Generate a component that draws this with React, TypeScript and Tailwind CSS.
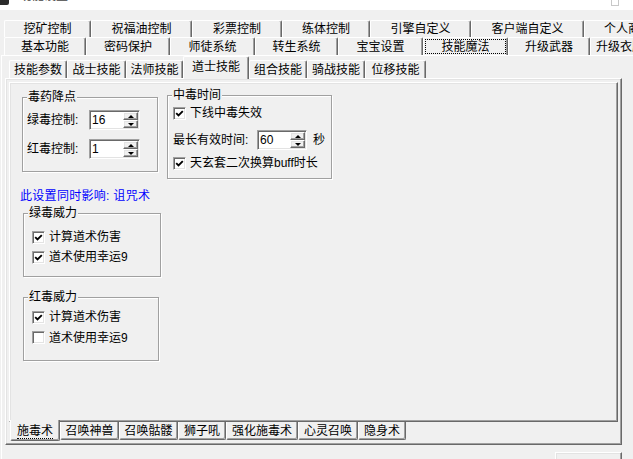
import React from "react";

// classic 3D edges
const raised =
  "border border-t-white border-l-white border-r-[#696969] border-b-[#696969] shadow-[inset_-1px_-1px_0_#a0a0a0,inset_1px_1px_0_#e3e3e3]";
const sunken =
  "border border-t-[#a0a0a0] border-l-[#a0a0a0] border-r-white border-b-white shadow-[inset_1px_1px_0_#696969,inset_-1px_-1px_0_#e3e3e3]";
const tabTop =
  "border-t border-l border-r border-t-white border-l-white border-r-[#696969] shadow-[inset_-1px_0_0_#a0a0a0] rounded-t-[2px]";
const tabBottom =
  "border-b border-l border-r border-b-[#696969] border-l-white border-r-[#696969] shadow-[inset_-1px_-1px_0_#a0a0a0] rounded-b-[2px]";
const etched =
  "border border-[#a0a0a0] shadow-[1px_1px_0_white,inset_1px_1px_0_white]";

type Tab = { label: string; w: string; active?: boolean };

const mainRow1: Tab[] = [
  { label: "挖矿控制", w: "w-[87px]" },
  { label: "祝福油控制", w: "w-[101px]" },
  { label: "彩票控制", w: "w-[90px]" },
  { label: "练体控制", w: "w-[88px]" },
  { label: "引擎自定义", w: "w-[101px]" },
  { label: "客户端自定义", w: "w-[113px]" },
  { label: "个人商店", w: "w-[88px]" },
];

const mainRow2: Tab[] = [
  { label: "基本功能", w: "w-[82px]" },
  { label: "密码保护", w: "w-[84px]" },
  { label: "师徒系统", w: "w-[85px]" },
  { label: "转生系统", w: "w-[83px]" },
  { label: "宝宝设置", w: "w-[85px]" },
  { label: "技能魔法", w: "w-[85px]", active: true },
  { label: "升级武器", w: "w-[82px]" },
  { label: "升级衣服属性", w: "w-[84px]" },
];

const skillTabs: Tab[] = [
  { label: "技能参数", w: "w-[58px]" },
  { label: "战士技能", w: "w-[59px]" },
  { label: "法师技能", w: "w-[57px]" },
  { label: "道士技能", w: "w-[66px]", active: true },
  { label: "组合技能", w: "w-[58px]" },
  { label: "骑战技能", w: "w-[58px]" },
  { label: "位移技能", w: "w-[61px]" },
];

const taoistTabs: Tab[] = [
  { label: "施毒术", w: "w-[50px]", active: true },
  { label: "召唤神兽", w: "w-[59px]" },
  { label: "召唤骷髅", w: "w-[59px]" },
  { label: "狮子吼", w: "w-[48px]" },
  { label: "强化施毒术", w: "w-[72px]" },
  { label: "心灵召唤", w: "w-[60px]" },
  { label: "隐身术", w: "w-[48px]" },
];

function MainTab({ tab, h }: { tab: Tab; h: string }) {
  return (
    <div
      className={`${tab.w} ${h} ${tabTop} flex shrink-0 items-center justify-center whitespace-nowrap p-[1px] leading-[14px]`}
    >
      {tab.active ? (
        <div className="flex h-full w-full items-center justify-center border border-dotted border-black">
          {tab.label}
        </div>
      ) : (
        tab.label
      )}
    </div>
  );
}

function CheckBox({ on }: { on: boolean }) {
  return (
    <span
      className={`${sunken} flex h-[13px] w-[13px] shrink-0 items-center justify-center bg-white`}
    >
      {on && (
        <svg width="9" height="9" viewBox="0 0 9 9">
          <path
            d="M1.2 4.2 L3.5 6.5 L7.8 2.2"
            stroke="black"
            strokeWidth="1.9"
            fill="none"
          />
        </svg>
      )}
    </span>
  );
}

function CheckRow({ label, on, h }: { label: string; on: boolean; h: string }) {
  return (
    <div className={`flex ${h} items-center gap-[4px] leading-[14px]`}>
      <CheckBox on={on} />
      <span className="whitespace-nowrap">{label}</span>
    </div>
  );
}

function SpinBox({ value, w }: { value: string; w: string }) {
  return (
    <div className={`${sunken} ${w} flex h-[20px] shrink-0 bg-white`}>
      <span className="flex-1 self-center pl-[2px] leading-[14px]">{value}</span>
      <div className="flex w-[16px] flex-col py-[1px] pr-[1px]">
        <div className={`${raised} flex flex-1 items-center justify-center bg-[#f0f0f0]`}>
          <span className="h-0 w-0 border-x-[3px] border-b-[3px] border-x-transparent border-b-black" />
        </div>
        <div className={`${raised} flex flex-1 items-center justify-center bg-[#f0f0f0]`}>
          <span className="h-0 w-0 border-x-[3px] border-t-[3px] border-x-transparent border-t-black" />
        </div>
      </div>
    </div>
  );
}

function Group({
  title,
  className,
  children,
}: {
  title: string;
  className: string;
  children: React.ReactNode;
}) {
  return (
    <fieldset className={`${etched} ${className} shrink-0`}>
      <legend className="ml-[4px] bg-[#f0f0f0] px-[1px] leading-[14px]">{title}</legend>
      {children}
    </fieldset>
  );
}

export default function App() {
  return (
    <div className="relative h-[459px] w-[633px] overflow-hidden bg-[#f0f0f0] font-['Liberation_Sans','Noto_Sans_CJK_SC',sans-serif] text-[12px] text-black">
      {/* window caption, mostly scrolled off */}
      <div className="flex h-[10px] items-start overflow-hidden bg-white">
        <div className="h-[5px] w-[9px] rounded-br-[2px] bg-[#2b2b2b]" />
        <span className="-mt-[11px] ml-[11px] leading-[14px] text-[#444]">功能设置</span>
        <div className="ml-auto mr-[14px] h-[6px] w-[8px] border border-t-0 border-[#c8c8c8]" />
      </div>

      <div className="h-[10px]" />

      {/* top-level tab rows */}
      <div className="ml-[4px] flex h-[17px]">
        {mainRow1.map((t) => (
          <MainTab key={t.label} tab={t} h="h-[17px]" />
        ))}
      </div>
      <div className="ml-[4px] flex h-[18px]">
        {mainRow2.map((t) => (
          <MainTab key={t.label} tab={t} h="h-[18px]" />
        ))}
      </div>

      {/* top-level page */}
      <div className="ml-[1px] h-[420px] w-[700px] border-l border-t border-white pl-[3px]">
        {/* skill class tabs */}
        <div className="ml-[4px] flex h-[22px] items-end">
          {skillTabs.map((t) =>
            t.active ? (
              <div
                key={t.label}
                className={`${t.w} ${tabTop} relative z-10 -mb-[1px] flex h-[23px] shrink-0 items-center justify-center bg-[#f0f0f0] pb-[3px] leading-[14px]`}
              >
                {t.label}
              </div>
            ) : (
              <div
                key={t.label}
                className={`${t.w} ${tabTop} flex h-[18px] shrink-0 items-center justify-center leading-[14px]`}
              >
                {t.label}
              </div>
            )
          )}
        </div>

        {/* 道士技能 page */}
        <div className={`${raised} h-[367px] w-[617px] pl-[3px] pt-[3px]`}>
          <div className={`${raised} flex h-[340px] w-[609px] items-start pl-[12px]`}>
            {/* left column */}
            <div className="mt-[7px] flex w-[145px] shrink-0 flex-col items-start">
              <Group title="毒药降点" className="h-[82px] w-[136px]">
                <div className="mt-[6px] flex items-center pl-[4px]">
                  <span className="w-[62px] leading-[14px]">绿毒控制:</span>
                  <SpinBox value="16" w="w-[51px]" />
                </div>
                <div className="mt-[9px] flex items-center pl-[4px]">
                  <span className="w-[62px] leading-[14px]">红毒控制:</span>
                  <SpinBox value="1" w="w-[51px]" />
                </div>
              </Group>

              <p className="-ml-[2px] mt-[17px] whitespace-nowrap leading-[14px] tracking-[0.3px] text-[#0000ff]">
                此设置同时影响: 诅咒术
              </p>

              <Group title="绿毒威力" className="ml-[1px] mt-[3px] h-[71px] w-[138px]">
                <div className="mt-[7px] pl-[8px]">
                  <CheckRow label="计算道术伤害" on h="h-[20px]" />
                  <CheckRow label="道术使用幸运9" on h="h-[20px]" />
                </div>
              </Group>

              <Group title="红毒威力" className="ml-[1px] mt-[13px] h-[71px] w-[136px]">
                <div className="mt-[3px] pl-[8px]">
                  <CheckRow label="计算道术伤害" on h="h-[20px]" />
                  <CheckRow label="道术使用幸运9" on={false} h="h-[21px]" />
                </div>
              </Group>
            </div>

            {/* right column */}
            <Group title="中毒时间" className="mt-[5px] h-[91px] w-[165px]">
              <div className="mt-[1px] pl-[5px]">
                <CheckRow label="下线中毒失效" on h="h-[20px]" />
              </div>
              <div className="mt-[7px] flex items-center pl-[5px]">
                <span className="w-[84px] whitespace-nowrap leading-[14px]">最长有效时间:</span>
                <SpinBox value="60" w="w-[50px]" />
                <span className="ml-[6px] leading-[14px]">秒</span>
              </div>
              <div className="mt-[3px] pl-[5px]">
                <CheckRow label="天玄套二次换算buff时长" on h="h-[20px]" />
              </div>
            </Group>
          </div>

          {/* skill tabs along the bottom edge */}
          <div className="ml-[1px] flex h-[21px] items-start">
            {taoistTabs.map((t) =>
              t.active ? (
                <div
                  key={t.label}
                  className={`${t.w} ${tabBottom} relative z-10 -mt-[2px] flex h-[21px] shrink-0 items-center justify-center bg-[#f0f0f0] pt-[3px] leading-[14px]`}
                >
                  <span className="border-b border-dotted border-black leading-[13px]">{t.label}</span>
                </div>
              ) : (
                <div
                  key={t.label}
                  className={`${t.w} ${tabBottom} flex h-[18px] shrink-0 items-center justify-center leading-[14px]`}
                >
                  {t.label}
                </div>
              )
            )}
          </div>
        </div>

        <div
          className={`${raised} ml-[550px] mt-[7px] flex h-[24px] w-[67px] justify-center pt-[6px] leading-[14px]`}
        >
          保存设置
        </div>
      </div>
    </div>
  );
}
